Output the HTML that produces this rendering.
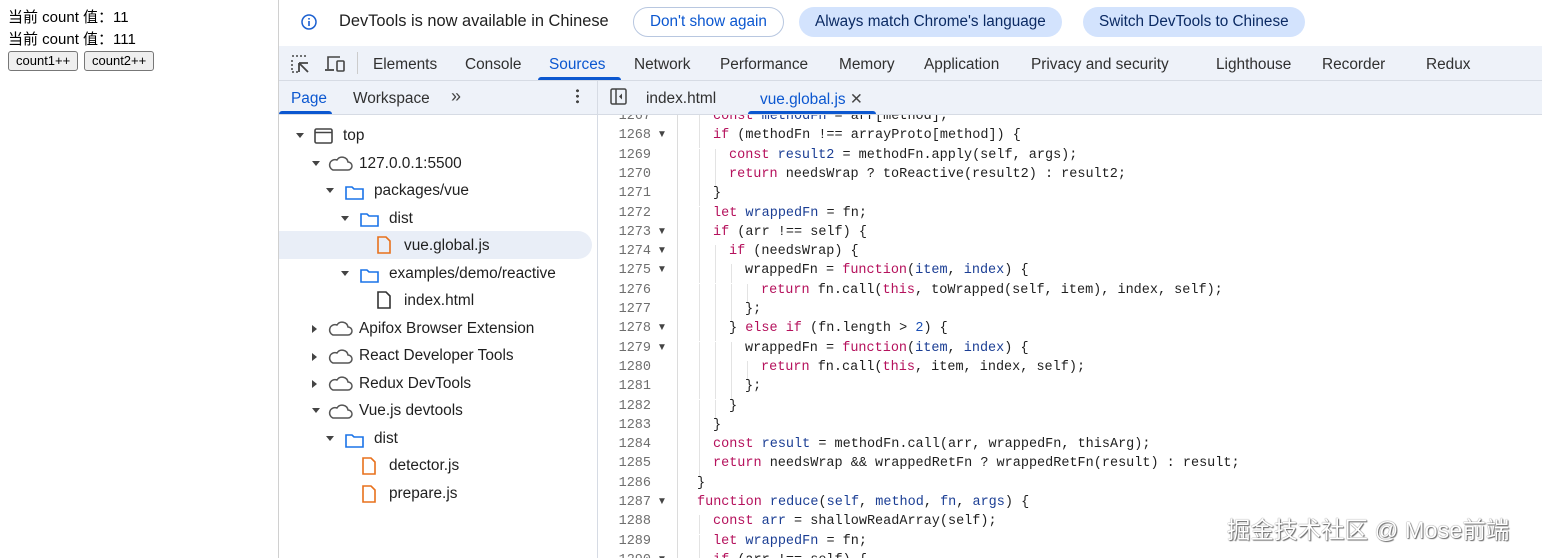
<!DOCTYPE html>
<html><head><meta charset="utf-8"><style>
*{margin:0;padding:0;box-sizing:border-box}
body{width:1542px;height:558px;overflow:hidden;background:#fff;font-family:"Liberation Sans","Noto Sans CJK SC",sans-serif;position:relative;color:#1f1f1f}
.a{position:absolute;white-space:nowrap}
.btn{position:absolute;top:51px;height:20px;border:1px solid #777;border-radius:3px;background:#efefef;font-size:13px;line-height:18px;padding:0 7px;color:#000}
.pill{position:absolute;top:7px;height:30px;border-radius:15px;font-size:15.3px;line-height:30px;padding:0 16px;color:#0b2a63;background:#d3e3fd}
.tab{position:absolute;top:56px;font-size:15.4px;color:#303030}
.tr{position:absolute;font-size:15.4px;color:#1f1f1f;line-height:20px}
.code{position:absolute;left:0;font-family:"Liberation Mono","DejaVu Sans Mono",monospace;font-size:13.5px;white-space:pre;color:#1f1f1f}
.ln{position:absolute;left:600px;width:51px;text-align:right;font-family:"Liberation Mono",monospace;font-size:13.5px;color:#6e6e6e}
.k{color:#b5115c}.v{color:#1b3e94}.n{color:#1a4fb5}
</style></head><body>
<div class="a" style="left:8px;top:6px;font-size:15px;color:#000">当前 count 值：11</div>
<div class="a" style="left:8px;top:28px;font-size:15px;color:#000">当前 count 值：111</div>
<div class="btn" style="left:8px">count1++</div>
<div class="btn" style="left:84px">count2++</div>
<div class="a" style="left:278px;top:0;width:1px;height:558px;background:#d0d0d0"></div>

<svg class="a" style="left:300px;top:13px" width="18" height="18" viewBox="0 0 18 18"><circle cx="9" cy="9" r="7" fill="none" stroke="#1a5fd0" stroke-width="1.5"/><rect x="8.2" y="8" width="1.6" height="5" fill="#1a5fd0"/><rect x="8.2" y="5" width="1.6" height="1.6" fill="#1a5fd0"/></svg>
<div class="a" style="left:339px;top:12px;font-size:16.4px;color:#1f1f1f">DevTools is now available in Chinese</div>
<div class="pill" style="left:633px;background:#fff;border:1px solid #b8c7e0;color:#0b57d0;line-height:28px">Don't show again</div>
<div class="pill" style="left:799px">Always match Chrome's language</div>
<div class="pill" style="left:1083px">Switch DevTools to Chinese</div>

<div class="a" style="left:279px;top:46px;width:1263px;height:35px;background:#eef2f9;border-bottom:1px solid #d6dbe4"></div>
<svg class="a" style="left:290px;top:54px" width="20" height="20" viewBox="0 0 20 20"><path d="M2 2h2M6 2h2M10 2h2M14 2h2M2 6v2M2 10v2M2 14v2M2 18h2M6 18h2" stroke="#444" stroke-width="1.5"/><path d="M9 9l9 0M9 9v9M9 9l9 9" stroke="#444" stroke-width="1.8" fill="none"/></svg>
<svg class="a" style="left:324px;top:54px" width="22" height="20" viewBox="0 0 22 20"><path d="M4 15V3h12" stroke="#444" stroke-width="1.6" fill="none"/><path d="M1 16h9" stroke="#444" stroke-width="1.8"/><rect x="13" y="7" width="7" height="10" rx="1" fill="none" stroke="#444" stroke-width="1.6"/></svg>
<div class="a" style="left:357px;top:52px;width:1px;height:22px;background:#ccc"></div>
<div class="tab" style="left:373px">Elements</div>
<div class="tab" style="left:465px">Console</div>
<div class="tab" style="left:549px;color:#0b57d0">Sources</div>
<div class="a" style="left:538px;top:77px;width:83px;height:3px;border-radius:3px 3px 0 0;background:#0b57d0"></div>
<div class="tab" style="left:634px">Network</div>
<div class="tab" style="left:720px">Performance</div>
<div class="tab" style="left:839px">Memory</div>
<div class="tab" style="left:924px">Application</div>
<div class="tab" style="left:1031px">Privacy and security</div>
<div class="tab" style="left:1216px">Lighthouse</div>
<div class="tab" style="left:1322px">Recorder</div>
<div class="tab" style="left:1426px">Redux</div>

<div class="a" style="left:279px;top:81px;width:1263px;height:34px;background:#eef2f9;border-bottom:1px solid #d6dbe4"></div>
<div class="a" style="left:597px;top:81px;width:1px;height:477px;background:#d6dbe4"></div>
<div class="a" style="left:291px;top:90px;font-size:15.4px;color:#0b57d0">Page</div>
<div class="a" style="left:279px;top:111px;width:53px;height:3px;border-radius:3px 3px 0 0;background:#0b57d0"></div>
<div class="a" style="left:353px;top:90px;font-size:15.4px;color:#303030">Workspace</div>
<div class="a" style="left:451px;top:86px;font-size:18px;color:#444">»</div>
<div class="a" style="left:576px;top:88px;width:3px;height:16px;background:radial-gradient(circle,#444 1.4px,transparent 1.6px) 0 0/3px 5.5px"></div>
<svg class="a" style="left:610px;top:88px" width="17" height="17" viewBox="0 0 17 17"><rect x="1" y="1" width="15" height="15" rx="1.5" fill="none" stroke="#444" stroke-width="1.5"/><path d="M6 1v15" stroke="#444" stroke-width="1.5"/><path d="M12 5.5l-3 3 3 3z" fill="#444"/></svg>
<div class="a" style="left:646px;top:90px;font-size:15.4px;color:#303030">index.html</div>
<div class="a" style="left:760px;top:90px;font-size:15.4px;color:#0b57d0">vue.global.js <span style="color:#444">✕</span></div>
<div class="a" style="left:748px;top:111px;width:128px;height:3px;border-radius:3px 3px 0 0;background:#0b57d0"></div>

<div class="a" style="left:279px;top:231px;width:313px;height:28px;border-radius:0 14px 14px 0;background:#e9eef7"></div>
<svg class="a" style="left:279px;top:115px" width="318" height="400" viewBox="0 0 318 400">
<g fill="#444">
<path d="M17 18h8l-4 5z"/><path d="M33 46h8l-4 5z"/><path d="M47 73h8l-4 5z"/><path d="M62 101h8l-4 5z"/><path d="M62 156h8l-4 5z"/>
<path d="M33 210v8l5-4z"/><path d="M33 238v8l5-4z"/><path d="M33 265v8l5-4z"/><path d="M33 293h8l-4 5z"/><path d="M47 321h8l-4 5z"/>
</g>
<rect x="36" y="14" width="17" height="14" rx="1.5" fill="none" stroke="#444" stroke-width="1.6"/><path d="M36 17.5h17" stroke="#444" stroke-width="1.6"/>
<g fill="none" stroke="#555" stroke-width="1.5">
<path id="cl" d="M54 55h15a4 4 0 0 0 0-8a6 6 0 0 0-11-2a5 5 0 0 0-4 10z"/>
<use href="#cl" y="165"/><use href="#cl" y="193"/><use href="#cl" y="220"/><use href="#cl" y="248"/>
</g>
<g fill="none" stroke="#1a73e8" stroke-width="1.6">
<path id="fd" d="M67 72h6l2 2h9v10h-17z"/>
<use href="#fd" x="15" y="27"/><use href="#fd" x="15" y="83"/><use href="#fd" y="248"/>
</g>
<g fill="none" stroke-width="1.6">
<path d="M99 122h8l4 4v12h-12z" stroke="#e8711c"/>
<path d="M99 177h8l4 4v12h-12z" stroke="#333"/>
<path d="M84 343h8l4 4v12h-12z" stroke="#e8711c"/>
<path d="M84 371h8l4 4v12h-12z" stroke="#e8711c"/>
</g>
</svg>
<div class="tr" style="left:343px;top:126px">top</div>
<div class="tr" style="left:359px;top:154px">127.0.0.1:5500</div>
<div class="tr" style="left:374px;top:181px">packages/vue</div>
<div class="tr" style="left:389px;top:209px">dist</div>
<div class="tr" style="left:404px;top:236px">vue.global.js</div>
<div class="tr" style="left:389px;top:264px">examples/demo/reactive</div>
<div class="tr" style="left:404px;top:291px">index.html</div>
<div class="tr" style="left:359px;top:319px">Apifox Browser Extension</div>
<div class="tr" style="left:359px;top:346px">React Developer Tools</div>
<div class="tr" style="left:359px;top:374px">Redux DevTools</div>
<div class="tr" style="left:359px;top:401px">Vue.js devtools</div>
<div class="tr" style="left:374px;top:429px">dist</div>
<div class="tr" style="left:389px;top:456px">detector.js</div>
<div class="tr" style="left:389px;top:484px">prepare.js</div>

<div class="a" style="left:677px;top:115px;width:1px;height:443px;background:#dcdcdc"></div>
<div class="a" style="left:598px;top:115px;width:944px;height:443px;overflow:hidden">
<div style="position:relative;left:-598px;top:-115px">
<div id="code"></div>
</div></div>
<script>
var L=[
[1,'<span class="k">const</span> <span class="v">methodFn</span> = arr[method];',0],
[1,'<span class="k">if</span> (methodFn !== arrayProto[method]) {',1],
[2,'<span class="k">const</span> <span class="v">result2</span> = methodFn.apply(self, args);',0],
[2,'<span class="k">return</span> needsWrap ? toReactive(result2) : result2;',0],
[1,'}',0],
[1,'<span class="k">let</span> <span class="v">wrappedFn</span> = fn;',0],
[1,'<span class="k">if</span> (arr !== self) {',1],
[2,'<span class="k">if</span> (needsWrap) {',1],
[3,'wrappedFn = <span class="k">function</span>(<span class="v">item</span>, <span class="v">index</span>) {',1],
[4,'<span class="k">return</span> fn.call(<span class="k">this</span>, toWrapped(self, item), index, self);',0],
[3,'};',0],
[2,'} <span class="k">else if</span> (fn.length > <span class="n">2</span>) {',1],
[3,'wrappedFn = <span class="k">function</span>(<span class="v">item</span>, <span class="v">index</span>) {',1],
[4,'<span class="k">return</span> fn.call(<span class="k">this</span>, item, index, self);',0],
[3,'};',0],
[2,'}',0],
[1,'}',0],
[1,'<span class="k">const</span> <span class="v">result</span> = methodFn.call(arr, wrappedFn, thisArg);',0],
[1,'<span class="k">return</span> needsWrap && wrappedRetFn ? wrappedRetFn(result) : result;',0],
[0,'}',0],
[0,'<span class="k">function</span> <span class="v">reduce</span>(<span class="v">self</span>, <span class="v">method</span>, <span class="v">fn</span>, <span class="v">args</span>) {',1],
[1,'<span class="k">const</span> <span class="v">arr</span> = shallowReadArray(self);',0],
[1,'<span class="k">let</span> <span class="v">wrappedFn</span> = fn;',0],
[1,'<span class="k">if</span> (arr !== self) {',1]];
var h='';
L.forEach(function(l,i){
 var y=109+i*19.3;
 h+='<div class="ln" style="top:'+y+'px">'+(1267+i)+'</div>';
 if(l[2])h+='<div class="a" style="left:657px;top:'+(y+1)+'px;font-size:10px;color:#444">▼</div>';
 for(var g=1;g<=l[0];g++)h+='<div class="a" style="left:'+(699+16*(g-1))+'px;top:'+(y+1)+'px;width:1px;height:19px;background:#e3e3e3"></div>';
 h+='<div class="code" style="left:'+(697+16*l[0])+'px;top:'+y+'px">'+l[1].replace(/&&/g,'&amp;&amp;').replace(/ > /g,' &gt; ')+'</div>';
});
document.getElementById('code').innerHTML=h;
</script>
<div class="a" style="left:1227px;top:511px;font-size:23.5px;color:#fff;text-shadow:1px 1px 1px #666,0 0 1px #444">掘金技术社区 @ Mose前端</div>
</body></html>
